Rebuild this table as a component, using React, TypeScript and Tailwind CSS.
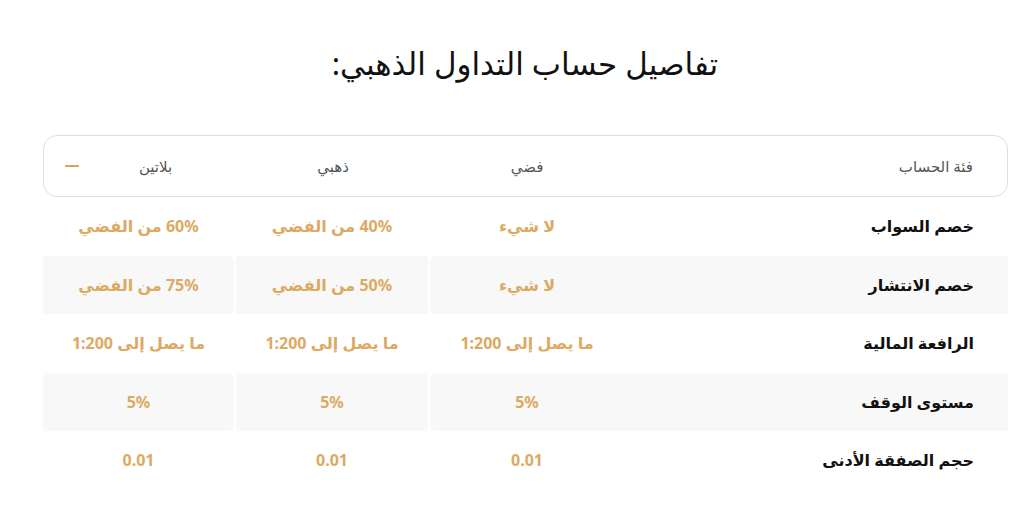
import React from "react";

type Row = { label: string; silver: string; gold: string; platinum: string };

const rows: Row[] = [
  { label: "خصم السواب", silver: "لا شيء", gold: "40% من الفضي", platinum: "60% من الفضي" },
  { label: "خصم الانتشار", silver: "لا شيء", gold: "50% من الفضي", platinum: "75% من الفضي" },
  { label: "الرافعة المالية", silver: "ما يصل إلى 1:200", gold: "ما يصل إلى 1:200", platinum: "ما يصل إلى 1:200" },
  { label: "مستوى الوقف", silver: "5%", gold: "5%", platinum: "5%" },
  { label: "حجم الصفقة الأدنى", silver: "0.01", gold: "0.01", platinum: "0.01" },
];

export default function App() {
  return (
    <div
      dir="rtl"
      className="w-[1024px] h-[514px] bg-white overflow-hidden"
      style={{ fontFamily: '"Noto Sans", "DejaVu Sans", sans-serif' }}
    >
      {/* title */}
      <h2 className="pt-[39px] h-[135px] text-center text-[31px] leading-[48px] text-[#111] font-normal pl-[26px]">
        تفاصيل حساب التداول الذهبي:
      </h2>

      <div className="mr-[16px] w-[965px]">
        {/* header row */}
        <div className="flex items-center h-[62px] border border-[#dedede] rounded-[14px] text-[15px] text-[#555]">
          <div className="w-[383px] pr-[34px]">فئة الحساب</div>
          <div className="w-[194px] text-center">فضي</div>
          <div className="w-[194px] text-center">ذهبي</div>
          <div className="flex-1 flex items-center">
            <span className="flex-1 text-center pr-[4px]">بلاتين</span>
            <span className="w-[14px] h-[2px] bg-[#d9a55c] ml-[21px]" />
          </div>
        </div>

        {/* data rows */}
        <div>
          {rows.map((r, i) => {
            const bg = i % 2 === 1 ? "bg-[#f8f8f8]" : "bg-white";
            return (
              <div key={r.label} className="flex h-[58.5px] gap-[2px]">
                <div className={`flex ${bg} rounded-l-[6px]`}>
                  <div className="w-[384px] flex items-center pr-[34px] text-[16px] font-semibold text-[#111]">
                    {r.label}
                  </div>
                  <div className="w-[194px] flex items-center justify-center text-[16px] font-bold text-[#dcaa63]">
                    {r.silver}
                  </div>
                </div>
                <div className={`w-[192px] flex items-center justify-center ${bg} text-[16px] font-bold text-[#dcaa63]`}>
                  {r.gold}
                </div>
                <div className={`w-[191px] flex items-center justify-center ${bg} rounded-r-[6px] text-[16px] font-bold text-[#dcaa63]`}>
                  {r.platinum}
                </div>
              </div>
            );
          })}
        </div>
      </div>
    </div>
  );
}
